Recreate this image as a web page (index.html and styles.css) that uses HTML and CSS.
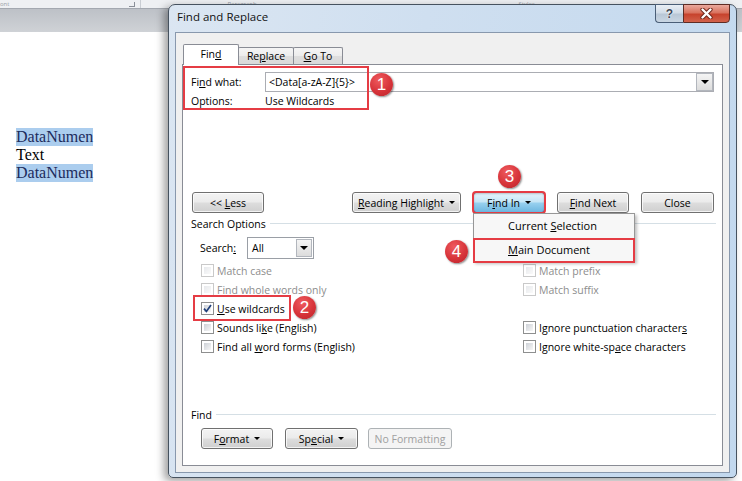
FILE: index.html
```html
<!DOCTYPE html>
<html>
<head>
<meta charset="utf-8">
<title>Find and Replace</title>
<link rel="stylesheet" href="styles.css">
</head>
<body>
<div class="screen">
  <div class="ribbon">
    <span class="rlabel r-font">ont</span>
    <span class="launcher"></span>
    <span class="rsep"></span>
    <span class="rlabel r-para">Paragraph</span>
    <span class="rlabel r-styles">Styles</span>
  </div>
  <div class="docbar"></div>
  <div class="doc">
    <div class="line"><span class="hl">DataNumen</span></div>
    <div class="line"><span>Text</span></div>
    <div class="line"><span class="hl">DataNumen</span></div>
  </div>

  <div class="dialog">
    <div class="titlebar">
      <span class="title">Find and Replace</span>
      <div class="caption">
        <span class="cbtn help">?</span>
        <span class="cbtn close">
          <svg width="13" height="11" viewBox="0 0 13 11">
            <path d="M2.5 1.5 L10.5 9.5 M10.5 1.5 L2.5 9.5" stroke="#6b2418" stroke-width="4.2" stroke-linecap="round" fill="none"/>
            <path d="M2.5 1.5 L10.5 9.5 M10.5 1.5 L2.5 9.5" stroke="#ffffff" stroke-width="2.4" stroke-linecap="round" fill="none"/>
          </svg>
        </span>
      </div>
    </div>
    <div class="client">
      <div class="tabs">
        <span class="tab active t-find"><span>Fin<u>d</u></span></span>
        <span class="tab t-replace"><span>Re<u>p</u>lace</span></span>
        <span class="tab t-goto"><span><u>G</u>o To</span></span>
      </div>
      <div class="panel">
        <div class="find-row">
          <span class="lbl">Fi<u>n</u>d what:</span>
          <div class="combo">
            <span class="combo-text">&lt;Data[a-zA-Z]{5}&gt;</span>
            <span class="dd-btn"><i class="tri"></i></span>
          </div>
        </div>
        <div class="opt-row">
          <span class="lbl">Options:</span>
          <span>Use Wildcards</span>
        </div>

        <div class="btn-row">
          <span class="btn w72"><span>&lt;&lt; <u>L</u>ess</span></span>
          <div class="btn-group">
            <span class="btn w108"><span><u>R</u>eading Highlight</span><i class="arrow"></i></span>
            <span class="btn w72 pressed"><span>F<u>i</u>nd In</span><i class="arrow"></i></span>
            <span class="btn w72"><span><u>F</u>ind Next</span></span>
            <span class="btn w73"><span>Close</span></span>
          </div>
        </div>

        <div class="group-hd"><span>Search Options</span><i class="gline"></i></div>

        <div class="search-row">
          <span class="slbl">Search<u>:</u></span>
          <div class="select">
            <span class="select-text">All</span>
            <span class="dd-btn"><i class="tri"></i></span>
          </div>
        </div>

        <div class="checks">
          <label class="chk disabled"><i class="box"></i><span class="txt">Match case</span></label>
          <label class="chk disabled"><i class="box"></i><span class="txt">Match prefix</span></label>
          <label class="chk disabled"><i class="box"></i><span class="txt">Find whole words only</span></label>
          <label class="chk disabled"><i class="box"></i><span class="txt">Match suffix</span></label>
          <label class="chk"><i class="box checked"><svg width="9" height="9" viewBox="0 0 9 9"><path d="M1 4.6 L3.4 7.4 L8 1" stroke="#1f3f7a" stroke-width="1.7" fill="none"/></svg></i><span class="txt"><u>U</u>se wildcards</span></label>
          <span class="chk empty"></span>
          <label class="chk"><i class="box"></i><span class="txt">Sounds li<u>k</u>e (English)</span></label>
          <label class="chk"><i class="box"></i><span class="txt">Ignore punctuation character<u>s</u></span></label>
          <label class="chk"><i class="box"></i><span class="txt">Find all <u>w</u>ord forms (English)</span></label>
          <label class="chk"><i class="box"></i><span class="txt">Ignore white-sp<u>a</u>ce characters</span></label>
        </div>

        <div class="group-hd find-hd"><span>Find</span><i class="gline"></i></div>

        <div class="btn-row2">
          <span class="btn w72"><span>F<u>o</u>rmat</span><i class="arrow"></i></span>
          <span class="btn w73"><span>Sp<u>e</u>cial</span><i class="arrow"></i></span>
          <span class="btn w84 disabled"><span>No Formatting</span></span>
        </div>

        <div class="menu">
          <div class="menu-item"><span>Current <u>S</u>election</span></div>
          <div class="menu-item"><span><u>M</u>ain Document</span></div>
        </div>

        <span class="mark m1"></span>
        <span class="mark m2"></span>
        <span class="mark m4"></span>
        <span class="badge b1">1</span>
        <span class="badge b2">2</span>
        <span class="badge b3">3</span>
        <span class="badge b4">4</span>
      </div>
    </div>
  </div>
</div>
</body>
</html>
```

FILE: styles.css
```css
* { box-sizing: border-box; }

html, body {
  margin: 0;
  padding: 0;
}

body {
  width: 742px;
  height: 481px;
  overflow: hidden;
  background: #ffffff;
  font-family: "Open Sans", "Noto Sans", sans-serif;
  font-size: 10.5px;
  color: #000;
}

u { text-decoration: underline; text-underline-offset: 1px; }

.screen {
  position: relative;
  width: 742px;
  height: 481px;
  overflow: hidden;
  background: #fff;
}

/* ---------- Word background ---------- */
.ribbon {
  height: 8px;
  background: #eef0f3;
  display: flex;
  align-items: center;
  color: #9a9ea6;
  font-size: 6px;
  line-height: 8px;
}

.rlabel { white-space: nowrap; }
.r-para { margin-left: 86px; }
.r-styles { margin-left: 262px; }

.launcher {
  width: 6px;
  height: 5px;
  margin-left: 120px;
  border-right: 1px solid #8a8f98;
  border-bottom: 1px solid #8a8f98;
}

.rsep {
  width: 1px;
  height: 8px;
  margin-left: 5px;
  background: #c9cdd3;
}

.docbar {
  height: 24px;
  border-top: 1px solid #a3a8b0;
  background: linear-gradient(#bdc1c7, #cfd2d6);
}

.doc {
  padding: 96px 0 0 16px;
  font-family: "Liberation Serif", "Times New Roman", serif;
  font-size: 16px;
  line-height: 18px;
}

.line { height: 18px; }
.line span { display: inline-block; height: 18px; }
.hl { background: #abcdee; color: #1c2b5c; }

/* ---------- dialog window ---------- */
.dialog {
  position: absolute;
  left: 168px;
  top: 4px;
  width: 569px;
  height: 474px;
  border: 1px solid #46525f;
  border-radius: 7px 7px 5px 5px;
  background: linear-gradient(100deg, #dbe6f2 0%, #cfdff0 40%, #c2d8ee 100%);
  box-shadow: -4px 3px 9px rgba(0, 0, 0, 0.38);
  display: flex;
  flex-direction: column;
}

.titlebar {
  height: 27px;
  display: flex;
  justify-content: space-between;
  align-items: flex-start;
  padding-left: 8px;
}

.title {
  padding-top: 4px;
  line-height: 16px;
  font-size: 11.5px;
  color: #111;
}

.caption {
  display: flex;
  margin-top: -1px;
  margin-right: 6px;
}

.cbtn {
  height: 19px;
  display: flex;
  align-items: center;
  justify-content: center;
  border: 1px solid #4a5e77;
}

.help {
  width: 28px;
  border-right: none;
  border-radius: 0 0 0 4px;
  background: linear-gradient(#e8eef5 0%, #d2dce7 45%, #b9c7d6 55%, #c9d6e3 100%);
  font-family: "Liberation Sans", sans-serif;
  font-weight: bold;
  font-size: 12px;
  color: #3d4756;
  text-shadow: 0 0 2px #fff, 0 0 1px #fff;
}

.close {
  width: 47px;
  border-color: #5e2c24;
  border-radius: 0 0 4px 0;
  background: linear-gradient(#eaa99d 0%, #d9735f 45%, #c7432d 55%, #d2624b 100%);
}

.client {
  flex: 1;
  margin: 0 6px 4px;
  border: 1px solid #8898ad;
  background: #f0f0f0;
  padding: 11px 6px 6px;
  display: flex;
  flex-direction: column;
}

/* ---------- tabs ---------- */
.tabs {
  display: flex;
  align-items: flex-end;
  height: 21px;
  margin: 0 0 -1px 1px;
  position: relative;
  z-index: 2;
}

.tab {
  height: 17px;
  margin-bottom: 1px;
  margin-left: -1px;
  border: 1px solid #898c95;
  border-bottom: none;
  border-radius: 2px 2px 0 0;
  background: linear-gradient(#f5f5f5 0%, #ececec 50%, #dedede 51%, #d9d9d9 100%);
  display: flex;
  align-items: center;
  justify-content: center;
  line-height: 14px;
}

.tab.active {
  height: 21px;
  margin-bottom: 0;
  margin-left: 0;
  background: #fff;
  position: relative;
  z-index: 3;
  padding-bottom: 2px;
}

.t-find { width: 56px; }
.t-replace { width: 56px; }
.t-goto { width: 50px; }

/* ---------- panel ---------- */
.panel {
  flex: 1;
  position: relative;
  background: #fff;
  border: 1px solid #898c95;
  padding: 0 8px;
  display: flex;
  flex-direction: column;
}

.find-row {
  margin-top: 7px;
  height: 20px;
  display: flex;
  align-items: center;
}

.lbl { width: 74px; flex: none; }

.combo {
  width: 449px;
  height: 20px;
  border: 1px solid #abadb3;
  display: flex;
  align-items: center;
  justify-content: space-between;
  padding-left: 3px;
}

.combo-text { white-space: nowrap; }

.dd-btn {
  width: 17px;
  height: 18px;
  border: 1px solid #b2b6bd;
  background: linear-gradient(#f4f4f4, #dcdcdc);
  display: flex;
  align-items: center;
  justify-content: center;
}

.tri {
  display: block;
  width: 0;
  height: 0;
  border-left: 4px solid transparent;
  border-right: 4px solid transparent;
  border-top: 4px solid #000;
}

.opt-row {
  margin-top: 1px;
  height: 16px;
  display: flex;
  align-items: center;
}

/* ---------- buttons ---------- */
.btn-row {
  margin-top: 83px;
  display: flex;
  justify-content: space-between;
  padding-left: 1px;
}

.btn-group {
  display: flex;
  gap: 12px;
}

.btn {
  height: 21px;
  border: 1px solid #707070;
  border-radius: 3px;
  background: linear-gradient(#f3f3f3 0%, #ebebeb 48%, #dddddd 52%, #cfcfcf 100%);
  box-shadow: inset 0 0 0 1px rgba(255, 255, 255, 0.75);
  display: flex;
  align-items: center;
  justify-content: center;
  white-space: nowrap;
  line-height: 14px;
  color: #000;
}

.btn.pressed {
  border-color: #2c628b;
  background: linear-gradient(#e5f4fc 0%, #c4e5f6 48%, #98d1ef 52%, #6db6e0 100%);
  box-shadow: inset 0 1px 2px rgba(0, 0, 0, 0.2);
  outline: 2px solid #e53c44;
  outline-offset: -1px;
}

.btn.disabled {
  border-color: #adb2b5;
  background: #f4f4f4;
  color: #a0a0a0;
  box-shadow: none;
}

.w72 { width: 72px; }
.w73 { width: 73px; }
.w84 { width: 84px; }
.w108 { width: 109px; }

.arrow {
  display: inline-block;
  width: 0;
  height: 0;
  margin-left: 5px;
  border-left: 3px solid transparent;
  border-right: 3px solid transparent;
  border-top: 3px solid #000;
}

/* ---------- group headers ---------- */
.group-hd {
  margin-top: 3px;
  height: 15px;
  display: flex;
  align-items: center;
}

.gline {
  flex: 1;
  height: 1px;
  margin-left: 4px;
  margin-right: -2px;
  background: #d5dfe5;
}

.find-hd { margin-top: 51px; }

/* ---------- search row ---------- */
.search-row {
  margin-top: 6px;
  margin-left: 9px;
  height: 22px;
  display: flex;
  align-items: center;
}

.slbl { width: 47px; }

.select {
  width: 67px;
  height: 22px;
  border: 1px solid #9a9fa6;
  display: flex;
  align-items: center;
  justify-content: space-between;
  padding: 1px 1px 1px 4px;
}

.select .dd-btn { height: 18px; width: 16px; }

/* ---------- checkboxes ---------- */
.checks {
  margin-top: 2px;
  margin-left: 10px;
  display: grid;
  grid-template-columns: 322px 1fr;
  grid-auto-rows: 19px;
}

.chk {
  display: flex;
  align-items: center;
  white-space: nowrap;
}

.box {
  width: 13px;
  height: 13px;
  flex: none;
  border: 1px solid #8e8f8f;
  padding: 2px;
  background: linear-gradient(135deg, #cdd1d7, #f7f7f7) content-box, #fff;
  display: flex;
  align-items: center;
  justify-content: center;
}

.box svg { display: block; margin: -2px; }

.chk .txt { margin-left: 3px; }

.chk.disabled { color: #8d8d8d; }
.chk.disabled .box {
  border-color: #c9c9c9;
  background: linear-gradient(135deg, #e7e9ec, #fafafa) content-box, #fff;
}

/* ---------- bottom buttons ---------- */
.btn-row2 {
  margin-top: 6px;
  margin-left: 10px;
  display: flex;
  gap: 12px;
}

.btn-row2 .w84 { margin-left: -2px; }

/* ---------- dropdown menu ---------- */
.menu {
  position: absolute;
  left: 290px;
  top: 148px;
  width: 162px;
  height: 49px;
  border: 1px solid #979797;
  background: #f7f7f7;
  box-shadow: 2px 2px 3px rgba(0, 0, 0, 0.25);
  z-index: 4;
}

.menu-item {
  height: 23px;
  display: flex;
  align-items: center;
  padding-left: 34px;
  white-space: nowrap;
  font-size: 11px;
}

.menu-item + .menu-item { height: 24px; }

/* ---------- annotation overlays ---------- */
.mark {
  position: absolute;
  border: 2px solid #e53c44;
  z-index: 5;
}

.m1 { left: 0; top: 1px; width: 186px; height: 44px; }
.m2 { left: 10px; top: 230px; width: 98px; height: 26px; }
.m4 { left: 290px; top: 173px; width: 162px; height: 25px; }

.badge {
  position: absolute;
  width: 23px;
  height: 23px;
  border-radius: 50%;
  background: radial-gradient(circle at 40% 30%, #ef5b5f 0%, #d7343a 55%, #b8232a 100%);
  box-shadow: 1px 1px 2px rgba(0, 0, 0, 0.45);
  color: #fff;
  font-family: "Liberation Sans", Arial, sans-serif;
  font-size: 17px;
  line-height: 23px;
  text-align: center;
  z-index: 6;
}

.b1 { left: 187px; top: 8px; }
.b2 { left: 110px; top: 231px; }
.b3 { left: 315px; top: 100px; }
.b4 { left: 262px; top: 175px; }
```
